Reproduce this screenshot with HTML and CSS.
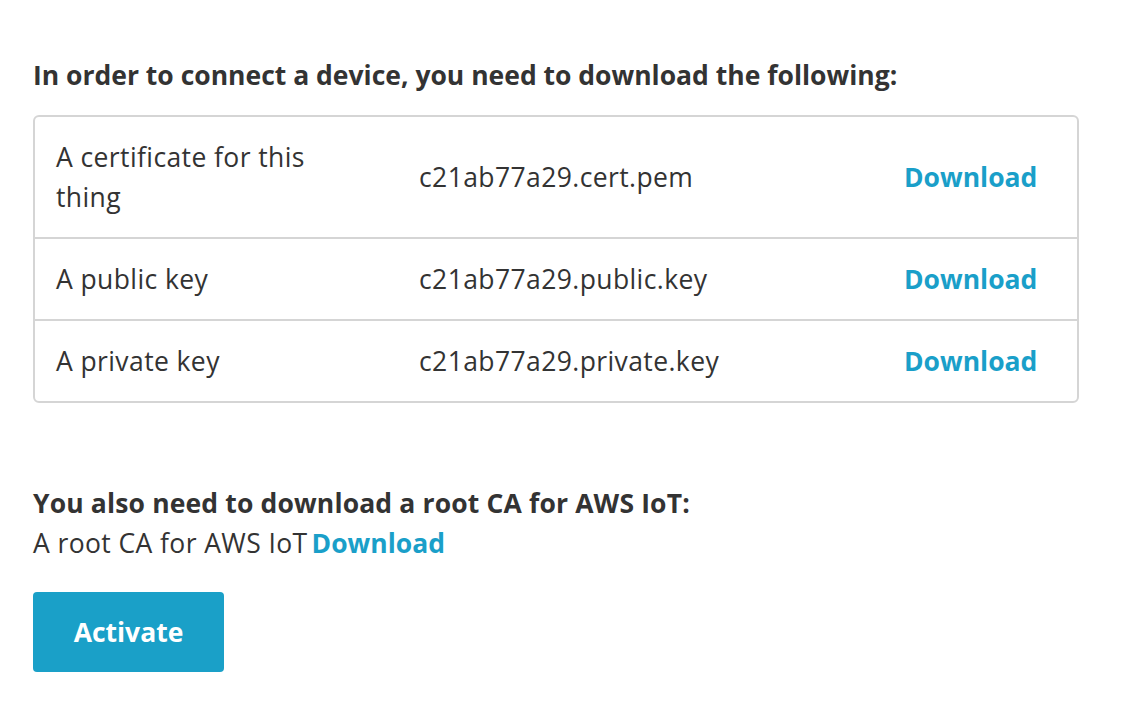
FILE: index.html
```html
<!DOCTYPE html>
<html>
<head>
<meta charset="utf-8">
<link rel="stylesheet" href="styles.css">
</head>
<body>
<main class="page">
  <h2 class="title">In order to connect a device, you need to download the following:</h2>
  <div class="files">
    <div class="row">
      <div class="cell name">A certificate for this<br>thing</div>
      <div class="cell file">c21ab77a29.cert.pem</div>
      <div class="cell action"><a class="link" href="#">Download</a></div>
    </div>
    <div class="row">
      <div class="cell name">A public key</div>
      <div class="cell file">c21ab77a29.public.key</div>
      <div class="cell action"><a class="link" href="#">Download</a></div>
    </div>
    <div class="row">
      <div class="cell name">A private key</div>
      <div class="cell file">c21ab77a29.private.key</div>
      <div class="cell action"><a class="link" href="#">Download</a></div>
    </div>
  </div>
  <h2 class="title root-title">You also need to download a root CA for AWS IoT:</h2>
  <p class="root">A root CA for AWS IoT<a class="link root-link" href="#">Download</a></p>
  <button class="btn">Activate</button>
</main>
</body>
</html>
```

FILE: styles.css
```css
html, body {
  margin: 0;
  padding: 0;
  background: #ffffff;
}
body {
  font-family: "Open Sans", "Noto Sans", sans-serif;
  font-size: 26.5px;
  line-height: 40px;
  letter-spacing: 0.4px;
  color: #333333;
}
.page {
  padding: 55px 55px 0 33px;
}
.title {
  margin: 0;
  font-size: 26.5px;
  line-height: 40px;
  font-weight: 700;
  letter-spacing: 0;
  color: #333333;
}
.files {
  margin-top: 20px;
  width: 1046px;
  box-sizing: border-box;
  border: 2px solid #d5d5d5;
  border-radius: 6px;
}
.row {
  display: grid;
  grid-template-columns: 363px 485px 1fr;
  align-items: center;
  border-top: 2px solid #d5d5d5;
}
.row:first-child {
  border-top: none;
}
.cell {
  padding: 20px 20px 20px 21px;
}
.link {
  color: #1a9fc9;
  font-weight: 700;
  letter-spacing: 0;
  text-decoration: none;
}
.root-link {
  margin-left: 4px;
}
.root-title {
  margin-top: 80px;
  letter-spacing: 0.15px;
}
.root {
  margin: 0;
}
.btn {
  display: block;
  margin-top: 29px;
  width: 191px;
  height: 80px;
  padding: 0;
  border: none;
  border-radius: 4px;
  background: #1aa0c8;
  color: #ffffff;
  font-family: inherit;
  font-size: 26.5px;
  font-weight: 700;
  letter-spacing: 0;
}
```
